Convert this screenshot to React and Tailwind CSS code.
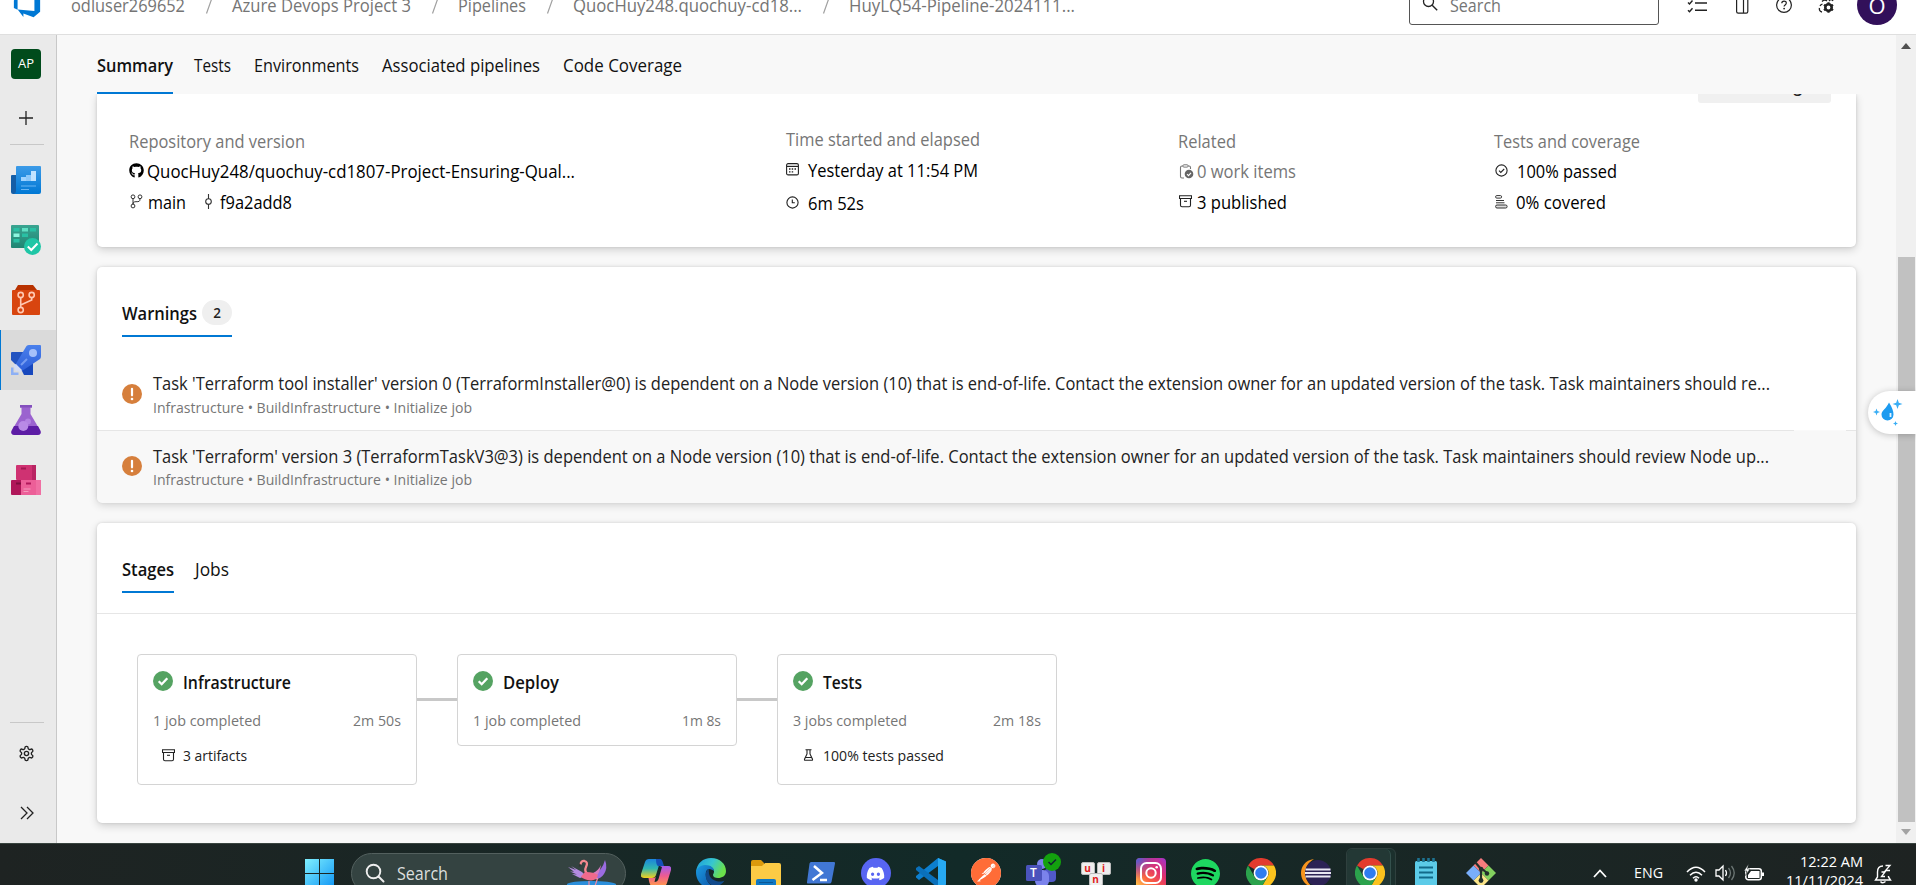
import React, { useLayoutEffect, useRef, useState } from "react";
import { FaGithub, FaDiscord } from "react-icons/fa";
import { SiPostman, SiSpotify } from "react-icons/si";

/* One line of text that always occupies exactly `w` pixels. */
function Fit({ w, className = "", children }) {
  const ref = useRef(null);
  const [scale, setScale] = useState(1);
  useLayoutEffect(() => {
    const natural = ref.current.getBoundingClientRect().width / scale;
    if (natural) setScale(w / natural);
  }, [w, children]);
  return (
    <span className={"inline-block shrink-0 whitespace-pre " + className} style={{ width: w }}>
      <span ref={ref} className="inline-block origin-left" style={{ transform: `translateY(-1px) scaleX(${scale})` }}>
        {children}
      </span>
    </span>
  );
}

function Svg({ w = 16, h = 16, box, className = "", children, ...rest }) {
  return (
    <svg width={w} height={h} viewBox={box || `0 0 ${w} ${h}`} fill="none" className={"block shrink-0 " + className} {...rest}>
      {children}
    </svg>
  );
}

/* ---------- header ---------- */
const crumbs = [
  ["odluser269652", 114, 21],
  ["Azure Devops Project 3", 179, 22],
  ["Pipelines", 68, 22],
  ["QuocHuy248.quochuy-cd18...", 229, 21],
  ["HuyLQ54-Pipeline-2024111...", 226, 0],
];

function Header() {
  return (
    <header className="h-[35px] shrink-0 overflow-hidden border-b border-[#dfdfdf] bg-white">
      <div className="-mt-[24px] flex h-[60px] items-center pl-[12px] text-[17.500px] text-[#757575]">
        <Svg w={30} h={30} box="0 0 16 16" className="-mt-[4px]">
          <path d="M15 3.622v8.512L11.500 15l-5.425-1.975v1.958L3.004 10.970l8.951.7V4.005L15 3.622zm-2.984.428L6.994 1v2.001L2.382 4.356 1 6.130v4.029l1.978.873V5.869l9.038-1.818z" fill="#0078d4" />
        </Svg>
        <div className="ml-[29px] flex items-center">
          {crumbs.map(([t, w], i) => (
            <React.Fragment key={t}>
              {i > 0 && (
                <span className="flex w-[47px] justify-center text-[#9a9a9a]">
                  <Svg w={8} h={20}><path d="M7 2 1.5 17.5" stroke="#a0a0a0" strokeWidth="1.2" /></Svg>
                </span>
              )}
              <Fit w={w} className="mt-px">{t}</Fit>
            </React.Fragment>
          ))}
        </div>
        <div className="-mt-[2px] ml-auto flex h-[40px] w-[250px] items-center rounded-[3px] border border-[#555] pl-[12px]">
          <Svg w={16} h={16} className="-mt-[4px]">
            <circle cx="6.5" cy="6.5" r="5" stroke="#222" strokeWidth="1.3" />
            <path d="m10.2 10.2 5 5" stroke="#222" strokeWidth="1.4" />
          </Svg>
          <Fit w={51} className="mt-[3px] ml-[12px]">Search</Fit>
        </div>
        <div className="flex items-center pl-[28px]">
          <Svg w={20} h={16} className="mt-[2px]">
            <path d="M1 3.5 2.5 5 5.5 1.5M1 11.2l1.5 1.5 3-3.5M8 4h12M8 11.3h12" stroke="#222" strokeWidth="1.4" />
          </Svg>
          <Svg w={14} h={18} className="ml-[28px]">
            <rect x="1.6" y="1.6" width="11.2" height="14.6" rx="1.6" stroke="#222" strokeWidth="1.2" />
            <path d="M8.500 2v14" stroke="#222" strokeWidth="1.2" />
          </Svg>
          <Svg w={18} h={18} className="-mt-[2px] ml-[26px]">
            <circle cx="9" cy="9" r="7.4" stroke="#222" strokeWidth="1.2" />
            <path d="M6.8 7.3c0-3 4.5-2.9 4.5-.2 0 1.8-2.2 1.8-2.2 3.4" stroke="#222" strokeWidth="1.2" />
            <circle cx="9.1" cy="12.6" r=".9" fill="#222" />
          </Svg>
          <Svg w={20} h={20} className="ml-[24px]">
            <path d="M5 16C3 15.500 2 14 2.500 12M3 10q.8-1.500 2.500-2M5 5.500C7 3.500 9 4 10 5M12 5c1.500-2 3-1.500 4 0" stroke="#222" strokeWidth="1.300" />
            <circle cx="11.500" cy="11.500" r="3.200" stroke="#222" strokeWidth="2.600" />
            <path d="M11.500 6.200v2M11.500 14.800v2M6.900 8.850l1.800 1M14.300 13.100l1.800 1M6.900 14.150l1.800-1M14.300 9.900l1.800-1" stroke="#222" strokeWidth="2.200" />
          </Svg>
          <div className="-mt-[2px] mr-[19px] ml-[20px] flex h-[40px] w-[40px] items-center justify-center rounded-full bg-[#32105a] text-[22px] text-white">
            O
          </div>
        </div>
      </div>
    </header>
  );
}

/* ---------- side rail ---------- */
function OverviewIcon() {
  return (
    <Svg w={30} h={30}>
      <defs><linearGradient id="ov" x2="0" y2="1"><stop stopColor="#3c9be8" /><stop offset="1" stopColor="#0078d4" /></linearGradient></defs>
      <path d="M0 11q0-1 1-1h6v19H2q-2 0-2-2z" fill="#155ea6" />
      <path d="M5 2q0-1 1-1h23q1 0 1 1v25q0 2-2 2H3q2-.5 2-3z" fill="url(#ov)" />
      <path d="M10 12h5v4h-5z" fill="#9fd3ff" /><path d="M15 10h5v6h-5z" fill="#8cc8fa" /><path d="M20 6h5v10h-5z" fill="#c0e3ff" />
      <path d="M10 21h15M10 24.500h8" stroke="#69b5f3" strokeWidth="1.200" />
    </Svg>
  );
}
function BoardsIcon() {
  return (
    <Svg w={30} h={30}>
      <defs><linearGradient id="bd" x2="0" y2="1"><stop stopColor="#3aa491" /><stop offset="1" stopColor="#1f8673" /></linearGradient></defs>
      <rect width="28" height="23" rx="1" fill="url(#bd)" />
      <path d="M2.500 3h6v3.500h-6zM19 3h6v3.500h-6zM11 8.500h6V12h-6zM2.500 14h6v3.500h-6z" fill="#29c0a4" />
      <path d="M11 3h6v3.500h-6z" fill="#5fe0c4" /><path d="M2.500 8.500h6V12h-6z" fill="#8cf5df" />
      <circle cx="21.500" cy="21.500" r="8.500" fill="#1fc6a6" />
      <path d="m16.800 21.500 3.500 3.500 6.200-6.500" stroke="#fff" strokeWidth="2" />
    </Svg>
  );
}
function ReposIcon() {
  return (
    <Svg w={30} h={30}>
      <path d="M7 0h15l2 2.500 2 2.500H4z" fill="#b83200" />
      <rect x="1" y="5" width="28" height="25" rx="1" fill="#d8450f" />
      <g stroke="#ffc9b3" strokeWidth="1.600"><circle cx="9.700" cy="10" r="2.600" /><circle cx="20.700" cy="10" r="2.600" /><circle cx="9.700" cy="25" r="2.600" /><path d="M9.700 12.600v9.800M20.700 12.600V15l-11 5" /></g>
    </Svg>
  );
}
function PipelinesIcon() {
  return (
    <Svg w={30} h={30}>
      <defs><linearGradient id="pl" x2="0" y2="1"><stop stopColor="#4a80ec" /><stop offset="1" stopColor="#2e5fd8" /></linearGradient></defs>
      <path d="M0 8q0-1 1-1h13L5 20 0 15z" fill="#2253c0" /><path d="M10 24l12-7v13h-9z" fill="#1747bd" />
      <path d="M15.500 1q1-1 2.500-1h11q1 0 1 1v10q0 2-1 3L11 26 4.500 19.500z" fill="url(#pl)" />
      <circle cx="22" cy="8" r="4" fill="#a6c1fa" />
      <path d="m16 14-6 6" stroke="#759bf0" strokeWidth="2" />
      <path d="M0 22.500h2.500v5H7.500V30H0z" fill="#8db0f5" /><path d="M2.500 20 5 19l6 6-1.500 2.500L7 25.500l-2 1z" fill="#d2dcf5" />
    </Svg>
  );
}
function TestIcon() {
  return (
    <Svg w={30} h={30}>
      <path d="M9 0h12v2.500h-1.500V9L29.500 26q.8 4-3 4h-23q-3.800 0-3-4L10.500 9V2.500H9z" fill="#9b63cf" />
      <path d="M3 21h24l2.500 5q.8 4-3 4h-23q-3.800 0-3-4z" fill="#5d1da5" />
      <path d="M9 0h12v2.500H9z" fill="#8450bd" />
      <circle cx="12.300" cy="21" r="5" fill="#b98ae6" /><circle cx="17" cy="16.500" r="3" fill="#b98ae6" opacity=".8" />
    </Svg>
  );
}
function ArtifactsIcon() {
  return (
    <Svg w={30} h={30}>
      <rect x="5" width="20" height="15" rx="1" fill="#cf3272" /><path d="M21 0h4v15h-4z" fill="#b92563" />
      <path d="M10 2.500h5v2h-5z" fill="#a31852" />
      <path d="M0 16q0-1 1-1h9v15H1q-1 0-1-1z" fill="#b0175a" /><path d="M10 15h19q1 0 1 1v13q0 1-1 1H10z" fill="#ec5f98" /><path d="M25 15h5v15h-5z" fill="#f06fa3" />
      <path d="M5 17.500h5v2H5z" fill="#7f0d3e" /><path d="M15 17.500h5v2h-5z" fill="#b0175a" /><path d="M12.500 24h7M12.500 26.500h5" stroke="#f59abd" />
    </Svg>
  );
}

const rail = [OverviewIcon, BoardsIcon, ReposIcon, PipelinesIcon, TestIcon, ArtifactsIcon];

function Rail() {
  return (
    <aside className="flex w-[57px] shrink-0 flex-col border-r border-[#c8c8c8] bg-[#eaeaea]">
      <div className="mt-[14px] ml-[11px] flex h-[30px] w-[30px] items-center justify-center rounded-[4px] bg-[#004b1c] text-white">
        <Fit w={16} className="mt-[2px] text-[13px]">AP</Fit>
      </div>
      <div className="flex h-[78px] w-[52px] items-center justify-center">
        <Svg w={14} h={14}><path d="M7 0v14M0 7h14" stroke="#222" strokeWidth="1.300" /></Svg>
      </div>
      <div className="-mt-[13px] ml-[10px] h-px w-[34px] bg-[#c8c8c8]" />
      <div className="mt-[5px] flex flex-col">
        {rail.map((Icon, i) => (
          <div key={i} className={"flex h-[60px] items-center border-l pl-[10px] " + (i === 3 ? "border-[#0078d4] bg-[#dadada]" : "border-transparent")}>
            <Icon />
          </div>
        ))}
      </div>
      <div className="mt-auto ml-[10px] h-px w-[34px] bg-[#c8c8c8]" />
      <div className="flex h-[60px] w-[53px] items-center justify-center">
        <Svg w={17} h={17} box="0 0 24 24" className="mt-px">
          <path d="M12.220 2h-.44a2 2 0 0 0-2 2v.18a2 2 0 0 1-1 1.730l-.43.25a2 2 0 0 1-2 0l-.15-.08a2 2 0 0 0-2.730.73l-.22.38a2 2 0 0 0 .73 2.730l.15.1a2 2 0 0 1 1 1.720v.51a2 2 0 0 1-1 1.740l-.15.09a2 2 0 0 0-.73 2.730l.22.38a2 2 0 0 0 2.730.73l.15-.08a2 2 0 0 1 2 0l.43.25a2 2 0 0 1 1 1.730V20a2 2 0 0 0 2 2h.44a2 2 0 0 0 2-2v-.18a2 2 0 0 1 1-1.730l.43-.25a2 2 0 0 1 2 0l.15.08a2 2 0 0 0 2.730-.73l.22-.39a2 2 0 0 0-.73-2.730l-.15-.08a2 2 0 0 1-1-1.740v-.5a2 2 0 0 1 1-1.740l.15-.09a2 2 0 0 0 .73-2.730l-.22-.38a2 2 0 0 0-2.730-.73l-.15.08a2 2 0 0 1-2 0l-.43-.25a2 2 0 0 1-1-1.730V4a2 2 0 0 0-2-2z" stroke="#222" strokeWidth="1.900" />
          <circle cx="12" cy="12" r="3" stroke="#222" strokeWidth="1.900" />
        </Svg>
      </div>
      <div className="flex h-[60px] w-[53px] items-center justify-center">
        <Svg w={14} h={14}><path d="m1 1 6 6-6 6M7 1l6 6-6 6" stroke="#222" strokeWidth="1.300" /></Svg>
      </div>
    </aside>
  );
}

/* ---------- small glyphs ---------- */
const Branch = () => (
  <Svg w={13} h={15}><g stroke="#333" strokeWidth="1"><circle cx="3" cy="2.800" r="1.900" /><circle cx="10" cy="2.800" r="1.900" /><circle cx="3" cy="12" r="1.900" /><path d="M3 4.700v5.400M10 4.700c0 3-1 3-4 3-2 0-3 .5-3 2.500" /></g></Svg>
);
const Commit = () => (
  <Svg w={9} h={15}><path d="M4.500 0v5M4.500 10v5" stroke="#333" strokeWidth="1.100" /><circle cx="4.500" cy="7.500" r="2.800" stroke="#333" strokeWidth="1.100" /></Svg>
);
const Calendar = () => (
  <Svg w={13} h={13}><rect x=".6" y=".6" width="11.800" height="11.300" rx="1.500" stroke="#222" strokeWidth="1.100" /><path d="M1 3.400h11" stroke="#222" strokeWidth="1.200" /><path d="M3 6h1.500M5.700 6h1.500M8.500 6H10M3 8.800h1.500M5.700 8.800h1.500" stroke="#222" strokeWidth="1.300" /></Svg>
);
const Clock = () => (
  <Svg w={13} h={13}><circle cx="6.500" cy="6.500" r="5.600" stroke="#222" strokeWidth="1.100" /><path d="M6.300 3.500v3.300h2.500" stroke="#222" strokeWidth="1.100" /></Svg>
);
const WorkItem = () => (
  <Svg w={15} h={15}><path d="M5 14H3q-1.500 0-1.500-1.500v-9Q1.500 2 3 2h7q1.500 0 1.500 1.500V5" stroke="#777" strokeWidth="1.100" /><rect x="4" y=".8" width="5" height="2.300" rx=".8" fill="#fff" stroke="#777" /><circle cx="10" cy="10" r="4.300" fill="#666" /><path d="m8 10.200 1.500 1.400L12 8.800" stroke="#fff" strokeWidth="1.100" /></Svg>
);
const Archive = () => (
  <Svg w={13} h={13}><path d="M.5.800h12v2.700H.5zM1.500 3.500h10v6.700q0 1.500-1.500 1.500H3q-1.500 0-1.500-1.500z" stroke="#222" strokeWidth="1.100" /><path d="M5 6.300h3" stroke="#222" strokeWidth="1.100" /></Svg>
);
const Passed = () => (
  <Svg w={13} h={13}><circle cx="6.500" cy="6.500" r="5.600" stroke="#222" strokeWidth="1.100" /><path d="m4 6.600 1.800 1.800L9.200 5" stroke="#222" strokeWidth="1.100" /></Svg>
);
const Covered = () => (
  <Svg w={13} h={14}><g stroke="#333" strokeWidth="1"><rect x=".6" y=".6" width="6" height="2.500" rx="1.200" /><path d="M1 5.500h8M1 7.800h8.500" /><rect x=".6" y="10" width="11.500" height="3" rx="1.400" fill="#ddd" /></g></Svg>
);
const Beaker = () => (
  <Svg w={11} h={12}><path d="M2.500.8h6M4 1v4L1.500 10.300q-.3 1 .8 1h6.400q1.100 0 .8-1L7 5V1M2.800 8.500h5.400" stroke="#222" strokeWidth="1.100" /></Svg>
);
const Success = () => (
  <Svg w={20} h={20}><circle cx="10" cy="10" r="10" fill="#55a362" /><path d="m5.700 10.200 3 3 5.600-6" stroke="#fff" strokeWidth="2.300" /></Svg>
);
const Warn = () => (
  <Svg w={20} h={20}><circle cx="10" cy="10" r="10" fill="#d67f3c" /><path d="M10 4.800v6.500" stroke="#fff" strokeWidth="2.200" strokeLinecap="round" /><circle cx="10" cy="15" r="1.300" fill="#fff" /></Svg>
);

/* ---------- main content ---------- */
const tabs = [["Summary", 76], ["Tests", 37], ["Environments", 105], ["Associated pipelines", 158], ["Code Coverage", 119]];
const card = "rounded-[5px] bg-white shadow-[0_3px_8px_rgba(0,0,0,0.16),0_0_3px_rgba(0,0,0,0.12)]";

function Tabs() {
  return (
    <nav className="flex h-[59px] shrink-0 pl-[40px] text-[17.500px] text-[#111]">
      {tabs.map(([t, w], i) => (
        <div key={t} className={"flex h-full items-center border-b-2 " + (i === 0 ? "mr-[21px] border-[#0078d4] font-semibold" : "mr-[23px] border-transparent")}>
          <Fit w={w} className="mt-[5px]">{t}</Fit>
        </div>
      ))}
    </nav>
  );
}

function Summary() {
  const row = "flex h-[30px] items-center ";
  const head = row + "text-[#767676]";
  return (
    <section className="h-[173px] shrink-0 overflow-hidden px-[40px]">
      <div className={"flex h-[153px] flex-col rounded-t-none pl-[33px] " + card}>
        <div className="mr-[25px] h-[9px] self-end overflow-hidden">
          <div className="-mt-[31px] flex h-[40px] w-[133px] items-center justify-center rounded-[3px] bg-[#f0f0f0] text-[17.500px] font-semibold text-[#222]">
            <Fit w={93} className="mt-[6px]">View change</Fit>
          </div>
        </div>
        <div className="flex pt-[24px] text-[17.500px] text-black">
          <div className="-ml-px w-[657px]">
            <div className={head}><Fit w={176}>Repository and version</Fit></div>
            <div className={row}><FaGithub className="mr-[3px] -mt-[3px] h-[15px] w-[15px]" /><Fit w={428}>QuocHuy248/quochuy-cd1807-Project-Ensuring-Qual...</Fit></div>
            <div className={row + "mt-px"}>
              <span className="-mt-[3px] mr-[5px] ml-px"><Branch /></span><Fit w={38}>main</Fit>
              <span className="mr-[7px] ml-[18px] -mt-[4px]"><Commit /></span><Fit w={72}>f9a2add8</Fit>
            </div>
          </div>
          <div className="-mt-[2px] w-[393px]">
            <div className={head}><Fit w={194}>Time started and elapsed</Fit></div>
            <div className={row + "mt-px"}><span className="-mt-[3px] mr-[9px]"><Calendar /></span><Fit w={170}>Yesterday at 11:54 PM</Fit></div>
            <div className={row + "mt-[3px]"}><span className="-mt-[3px] mr-[9px]"><Clock /></span><Fit w={56}>6m 52s</Fit></div>
          </div>
          <div className="-ml-px w-[316px]">
            <div className={head}><Fit w={58}>Related</Fit></div>
            <div className={head}><span className="-mt-[2px] mr-[3px] ml-px"><WorkItem /></span><Fit w={99}>0 work items</Fit></div>
            <div className={row + "mt-px"}><span className="-mt-[3px] mr-[5px] ml-px"><Archive /></span><Fit w={90}>3 published</Fit></div>
          </div>
          <div>
            <div className={head}><Fit w={146}>Tests and coverage</Fit></div>
            <div className={row}><span className="-mt-[4px] mr-[9px] ml-px"><Passed /></span><Fit w={100}>100% passed</Fit></div>
            <div className={row + "mt-px"}><span className="-mt-[3px] mr-[8px] ml-px"><Covered /></span><Fit w={90}>0% covered</Fit></div>
          </div>
        </div>
      </div>
    </section>
  );
}

function Warning({ text, w, shaded }) {
  return (
    <div className={"flex h-[72px] items-center pl-[25px] " + (shaded ? "rounded-b-[5px] bg-[#f8f8f8]" : "bg-white")}>
      <span className={shaded ? "-mt-[2px]" : "-mt-px"}><Warn /></span>
      <div className={"ml-[11px] flex flex-col " + (shaded ? "pt-[3px]" : "pt-[4px]")}>
        <div className="flex h-[24px] items-center text-[17.500px] text-[#222]"><Fit w={w}>{text}</Fit></div>
        <div className="flex h-[23px] items-center text-[15px] text-[#767676]"><Fit w={319}>Infrastructure • BuildInfrastructure • Initialize job</Fit></div>
      </div>
    </div>
  );
}

function Warnings() {
  return (
    <section className={"mx-[40px] h-[235px] shrink-0 " + card}>
      <div className="ml-[25px] flex h-[70px] w-[110px] items-end border-b-2 border-[#0078d4]">
        <div className="flex h-[44px] w-full items-center justify-between">
          <Fit w={75} className="mt-[3px] text-[17.500px] font-semibold text-[#111]">Warnings</Fit>
          <span className="-mt-[2px] flex h-[25px] w-[30px] items-center justify-center rounded-full bg-[#efefef] pt-[3px] text-[13.500px] font-semibold text-[#222]">2</span>
        </div>
      </div>
      <div className="h-[21px]" />
      <Warning w={1617} text="Task 'Terraform tool installer' version 0 (TerraformInstaller@0) is dependent on a Node version (10) that is end-of-life. Contact the extension owner for an updated version of the task. Task maintainers should re..." />
      <div className="flex h-px bg-[#e6e6e6] pr-[10px]"><div className="ml-auto h-px w-[52px] bg-[#fafafa]" /></div>
      <Warning shaded w={1616} text="Task 'Terraform' version 3 (TerraformTaskV3@3) is dependent on a Node version (10) that is end-of-life. Contact the extension owner for an updated version of the task. Task maintainers should review Node up..." />
    </section>
  );
}

function Stage({ name, nw, jobs, jw, time, tw, extra, ew, icon }) {
  return (
    <div className={"flex w-[280px] flex-col rounded-[4px] border border-[#d4d4d4] bg-white px-[15px] " + (extra ? "h-[131px]" : "h-[92px]")}>
      <div className="mt-[16px] flex h-[24px] items-center text-[17.500px] font-semibold text-[#111]">
        <span className="-mt-[4px] mr-[10px]"><Success /></span><Fit w={nw}>{name}</Fit>
      </div>
      <div className="mt-[14px] flex h-[24px] items-center justify-between text-[15px] text-[#767676]">
        <Fit w={jw}>{jobs}</Fit><Fit w={tw}>{time}</Fit>
      </div>
      {extra && (
        <div className="mt-[11px] flex h-[24px] items-center text-[15px] text-[#222]">
          <span className="-mt-[2px] flex w-[30px] pl-[9px]">{icon}</span><Fit w={ew}>{extra}</Fit>
        </div>
      )}
    </div>
  );
}

function Stages() {
  const line = <div className="mt-[44px] h-[3px] w-[40px] bg-[#c8c8c8]" />;
  return (
    <section className={"mx-[40px] mt-[21px] h-[300px] shrink-0 " + card}>
      <div className="flex h-[91px] border-b border-[#e6e6e6] pl-[25px] text-[17.500px] text-[#111]">
        <div className="flex h-[70px] items-center border-b-2 border-[#0078d4] pt-[27px] font-semibold"><Fit w={52}>Stages</Fit></div>
        <div className="ml-[21px] flex h-[70px] items-center pt-[25px]"><Fit w={34}>Jobs</Fit></div>
      </div>
      <div className="flex items-start pt-[40px] pl-[40px]">
        <Stage name="Infrastructure" nw={108} jobs="1 job completed" jw={108} time="2m 50s" tw={48} extra="3 artifacts" ew={64} icon={<Archive />} />
        {line}
        <Stage name="Deploy" nw={56} jobs="1 job completed" jw={108} time="1m 8s" tw={39} />
        {line}
        <Stage name="Tests" nw={39} jobs="3 jobs completed" jw={114} time="2m 18s" tw={48} extra="100% tests passed" ew={121} icon={<span className="pl-px"><Beaker /></span>} />
      </div>
    </section>
  );
}

function Scrollbar() {
  return (
    <div className="flex w-[20px] shrink-0 flex-col items-center bg-[#f0f0f0]">
      <Svg w={10} h={6} className="mt-[8px]"><path d="M0 6 5 0l5 6z" fill="#505050" /></Svg>
      <div className="mt-[208px] h-[565px] w-[17px] bg-[#c1c1c1]" />
      <Svg w={10} h={6} className="mt-[7px]"><path d="M0 0h10L5 6z" fill="#a3a3a3" /></Svg>
    </div>
  );
}

/* ---------- task bar ---------- */
const Copilot = () => (
  <Svg w={30} h={30}>
    <defs>
      <linearGradient id="c1" x2="0" y2="1"><stop stopColor="#1b84dd" /><stop offset=".5" stopColor="#30b7b0" /><stop offset="1" stopColor="#f4d11c" /></linearGradient>
      <linearGradient id="c2" x2="0" y2="1"><stop stopColor="#a05cf0" /><stop offset=".5" stopColor="#ee5b90" /><stop offset="1" stopColor="#ff9a4a" /></linearGradient>
    </defs>
    <path d="M21 8h6q4 0 3 4l-4 13q-1 3-4 3H11q-2 0-3-5l-.5-3H12q3 0 4-3l2-6q1-3 3-3z" fill="url(#c2)" />
    <path d="M14.500 20 18 9h3l-3.500 12q-1 3-4 3z" fill="#122a28" />
    <path d="M8 1h10q2 0 1 3l-4 13q-1 3-4 3H3q-4 0-3-4L4 4q1-3 4-3z" fill="url(#c1)" />
    <path d="M15 1h4q2 0 3 4l1 3h-6q-2-1-2-7z" fill="#1450b8" />
  </Svg>
);
const Edge = () => (
  <Svg w={30} h={30}>
    <defs>
      <linearGradient id="e1" x2="1" y2=".4"><stop stopColor="#1a9bdc" /><stop offset=".55" stopColor="#37c6d0" /><stop offset="1" stopColor="#6be04a" /></linearGradient>
      <linearGradient id="e2" x2="1" y2="1"><stop stopColor="#1b9be2" /><stop offset="1" stopColor="#0d55a8" /></linearGradient>
    </defs>
    <path d="M0 14C1 5 7 0 15 0c9 0 15 6 15 13 0 5-4 7-8 7-3 0-5-1-5-3 0-1 1-1 1-4 0-2-3-5-7-5-6 0-10 4-11 6z" fill="url(#e1)" />
    <path d="M0 14c0-3 4-7 9-7 6 0 9 3 9 6-1-1-3-2-5-2-5 0-5 14 5 18-10 3-18-5-18-15z" fill="url(#e2)" />
    <path d="M13 11c-6 2-4 17 7 17 4 0 7-3 8.500-5.500C24 25 11 23 13 11z" fill="#114a8b" />
  </Svg>
);
const Folder = () => (
  <Svg w={30} h={30}><path d="M0 4q0-2 2-2h8l3 3v4H0z" fill="#dc9a0c" /><path d="M0 8h11l3-3h14q2 0 2 2v21H0z" fill="#fccb45" /><path d="M5 23q0-2 2-2h16q2 0 2 2v7H5z" fill="#0f78c4" /><path d="M8 24.500h14" stroke="#0b5796" /></Svg>
);
const PowerShell = () => (
  <Svg w={30} h={30}><path d="M5 4h23q1.500 0 1 1.500L25.500 24q-.5 1.500-2 1.500H2q-1.500 0-1-1.500L3.500 5.500Q4 4 5 4z" fill="#4177d4" /><path d="m8 8 8 7L6.500 22M14 22h7" stroke="#fff" strokeWidth="2.500" /></Svg>
);
const Discord = () => (
  <span className="flex h-[30px] w-[30px] items-center justify-center rounded-full bg-[#5865f2]"><FaDiscord className="h-[19px] w-[19px] text-white" /></span>
);
const VsCode = () => (
  <Svg w={30} h={30}><path d="m22 0 8 3.500v23L22 30V8L3 22l-3-2.500V18z" fill="#0c7fcf" /><path d="m3 8 19 14v8L0 12v-2z" fill="#0a70bb" /><path d="m22 0 8 3.500v23L22 30z" fill="#27a9f2" /></Svg>
);
const Postman = () => (
  <span className="flex h-[30px] w-[30px] rounded-full bg-white"><SiPostman className="h-[30px] w-[30px] text-[#ff6c37]" /></span>
);
const Teams = () => (
  <span className="relative block h-[30px] w-[30px]">
    <Svg w={30} h={30}><circle cx="16" cy="6" r="5" fill="#7b83eb" /><circle cx="25" cy="8" r="3" fill="#5059c9" /><rect x="18" y="11" width="12" height="13" rx="4" fill="#5059c9" /><rect x="9" y="12" width="14" height="17" rx="6" fill="#7b83eb" /><rect y="7" width="16" height="16" rx="1.500" fill="#4b53bc" /></Svg>
    <span className="absolute top-[7px] left-0 flex h-[16px] w-[16px] items-center justify-center text-[12px] font-semibold text-white">T</span>
    <Svg w={18} h={18} className="absolute -top-[5px] left-[17px]"><circle cx="9" cy="9" r="9" fill="#13a10e" /><path d="m5.500 9 2.500 2.500 5-5" stroke="#123" strokeWidth="1.500" /></Svg>
  </span>
);
const Key = ({ c }) => (
  <span className="flex h-[13px] w-[14px] items-center justify-center rounded-[2px] border border-[#bbb] bg-[#eee] pb-[2px] text-[10px] leading-none font-bold text-[#e02020]">{c}</span>
);
const UniKey = () => (
  <span className="flex h-[30px] w-[30px] flex-col items-center pt-[4px]"><span className="flex w-full justify-between"><Key c="u" /><Key c="i" /></span><span className="-mt-[2px]"><Key c="n" /></span></span>
);
const Instagram = () => (
  <Svg w={30} h={30}>
    <defs>
      <linearGradient id="ig" x1="0" y1="1" x2="1" y2="0"><stop stopColor="#ffd34d" /><stop offset=".35" stopColor="#fb6040" /><stop offset=".65" stopColor="#e1306c" /><stop offset="1" stopColor="#a033d0" /></linearGradient>
      <radialGradient id="ig2" cx="0" cy="0" r=".7"><stop stopColor="#3f61e0" /><stop offset="1" stopColor="#7a3ad0" stopOpacity="0" /></radialGradient>
    </defs>
    <rect width="30" height="30" rx="4" fill="url(#ig)" /><rect width="30" height="30" rx="4" fill="url(#ig2)" />
    <rect x="5" y="5" width="20" height="20" rx="5.500" stroke="#fff" strokeWidth="2" /><circle cx="15" cy="15" r="4.700" stroke="#fff" strokeWidth="2" /><circle cx="20.700" cy="9.300" r="1.300" fill="#fff" />
  </Svg>
);
const Spotify = () => (
  <span className="flex h-[30px] w-[30px] items-center justify-center"><span className="rounded-full bg-black"><SiSpotify className="h-[29px] w-[29px] text-[#1ed760]" /></span></span>
);
const Chrome = () => (
  <Svg w={30} h={30}>
    <path d="M2 7.500A15 15 0 0 1 28 7.500H15a7.500 7.500 0 0 0-6.500 3.800z" fill="#e33b2e" />
    <path d="M28 7.500A15 15 0 0 1 15 30l6.500-11.200A7.500 7.500 0 0 0 15 7.500z" fill="#fcc31e" />
    <path d="M2 7.500A15 15 0 0 0 15 30l6.500-11.300a7.500 7.500 0 0 1-13 0z" fill="#2ba24c" />
    <circle cx="15" cy="15" r="7.400" fill="#fff" /><circle cx="15" cy="15" r="5.800" fill="#2f7cf0" />
  </Svg>
);
const Eclipse = () => (
  <Svg w={30} h={30}><path d="M13 1C4 2 0 9 0 15s4 13 12 14.500C2 22 1 8 13 1z" fill="#f7941e" /><circle cx="17" cy="15" r="13" fill="#2c2255" /><path d="M4.500 11.500h25M4 15h26M4.500 18.500h25" stroke="#e8e6f2" strokeWidth="1.900" /></Svg>
);
const Notepad = () => (
  <Svg w={30} h={30}><rect x="4" y="3" width="22" height="27" rx="1.500" fill="#5ccbe8" /><path d="M4 27.500h22V30H4z" fill="#e8eef0" /><path d="M7.500 0v4M12.500 0v4M17.500 0v4M22.500 0v4" stroke="#1d7392" strokeWidth="2.600" /><path d="M8 9.500h14M8 14.500h14M8 19.500h14" stroke="#126a8a" strokeWidth="1.800" /></Svg>
);
const Git = () => (
  <Svg w={30} h={30}>
    <path d="m15 0 7.500 7.500L15 15 7.500 7.500z" fill="#f77d7d" /><path d="M22.500 7.500 30 15l-7.500 7.500L15 15z" fill="#83d05f" /><path d="m15 15 7.500 7.500L15 30l-7.500-7.500z" fill="#fbe58a" /><path d="M7.500 7.500 15 15l-7.500 7.500L0 15z" fill="#79aefa" />
    <path d="m9 4 6 7v12M15 10l6 5" stroke="#22302c" strokeWidth="2.200" /><circle cx="15" cy="11" r="2.200" fill="#22302c" /><circle cx="21" cy="15.500" r="2.200" fill="#22302c" /><circle cx="15" cy="22.500" r="2.400" fill="#22302c" />
  </Svg>
);
const Flamingo = () => (
  <Svg w={50} h={28}>
    <path d="M0 25q4-3 24-3t25 3v3H0z" fill="#2b8fdb" />
    <path d="m1 8 8 3-5-4 11 6 4 4-6 2-8-4 5 .5-7-3 4 .2z" fill="#b48be0" />
    <path d="M27 15q8-3 11-14 3 8-1 14-4 6-10 5z" fill="#9a6be0" />
    <path d="M26 14q5-2 8-8-1 8-7 14z" fill="#d67ac0" />
    <path d="M22 22v6M27 18l3.500 1.500L28 27" stroke="#f58aa0" strokeWidth="1.200" />
    <path d="M13.500 5.500q.5-4 4-3.500 4 1 1.500 6-2 4 1.500 7" stroke="#f58a8f" strokeWidth="2.300" />
    <path d="M18 13q5 0 9 1l4 2q-1 5-7 5.500-8-1-10-4z" fill="#ef6a8c" />
    <path d="m12.500 4-.8 4 2.200-1.500z" fill="#333" />
  </Svg>
);

const apps = [Copilot, Edge, Folder, PowerShell, Discord, VsCode, Postman, Teams, UniKey, Instagram, Spotify, Chrome, Eclipse, Chrome, Notepad, Git];

function Taskbar() {
  return (
    <footer className="flex h-[42px] shrink-0 overflow-hidden border-t border-[#39443f] bg-linear-to-r from-[#1e2322] via-[#122a28] to-[#1e2322] text-white">
      <Svg w={30} h={30} className="mt-[15px] ml-[305px]">
        <defs><linearGradient id="wn" x2="1" y2="1" gradientUnits="objectBoundingBox"><stop stopColor="#7ff0ff" /><stop offset="1" stopColor="#1095f5" /></linearGradient></defs>
        <path d="M0 0h14v14H0zM15 0h14v14H15zM0 15h14v14H0zM15 15h14v14H15z" fill="url(#wn)" />
      </Svg>
      <div className="mt-[9px] ml-[16px] flex h-[41px] w-[275px] shrink-0 items-center rounded-full border border-[#53605e] bg-[#344341] pl-[13px]">
        <Svg w={20} h={20} className="-mt-[2px]"><circle cx="8.500" cy="8.500" r="6.800" stroke="#eee" strokeWidth="1.900" /><path d="m13.500 13.500 5 5" stroke="#eee" strokeWidth="2" strokeLinecap="round" /></Svg>
        <Fit w={51} className="mt-[2px] ml-[12px] text-[17.500px] text-[#dcdfde]">Search</Fit>
        <span className="mt-[1px] mr-[8px] ml-auto self-start pt-[4px]"><Flamingo /></span>
      </div>
      <div className="ml-[2px] flex">
        {apps.map((Icon, i) => (
          <div key={i} className="flex w-[55px] justify-center pt-[4px]">
            {i === 13 ? (
              <div className="flex h-[46px] w-[50px] rounded-[6px] border border-[#2f403e] bg-[#1b302d]">
                <div className="flex h-full w-[44px] justify-center rounded-[6px] border-r border-[#34514d] bg-[#233835] pt-[9px] pl-[4px]"><Icon /></div>
              </div>
            ) : (
              <div className="pt-[10px]"><Icon /></div>
            )}
          </div>
        ))}
      </div>
      <div className="ml-auto flex">
        <Svg w={14} h={9} className="mt-[25px]"><path d="m1 8 6-6.500L13 8" stroke="#fff" strokeWidth="1.800" /></Svg>
        <Fit w={29} className="mt-[19px] ml-[27px] text-[14.600px]">ENG</Fit>
        <Svg w={20} h={17} className="mt-[21px] ml-[23px]"><path d="M1 7Q10-2.500 19 7M4 10.200q6-6 12 0M7 13.200q3-3 6 0" stroke="#fff" strokeWidth="1.500" /><circle cx="10" cy="15" r="1.700" fill="#fff" /></Svg>
        <Svg w={21} h={18} className="mt-[20px] ml-[9px]"><path d="M1 6h3l4-4v14l-4-4H1z" stroke="#fff" strokeWidth="1.300" /><path d="M10.500 6q2 3 0 6" stroke="#fff" strokeWidth="1.300" /><path d="M13.500 4q4 5 0 10M16.500 2q5.500 7 0 14" stroke="#6c7674" strokeWidth="1.300" /></Svg>
        <Svg w={21} h={18} className="mt-[20px] ml-[8px]"><rect x="1.800" y="4.800" width="15.500" height="11" rx="2.500" stroke="#fff" strokeWidth="1.500" /><path d="M7 7h8.500v7H4v-3z" fill="#fff" /><path d="M18 8.500h2v3.500h-2z" fill="#fff" /><path d="M4.500 0 0 7h3L1.500 11.500 6 5H3.500z" fill="#fff" stroke="#1b2523" strokeWidth=".5" /></Svg>
        <div className="ml-[21px] flex w-[77px] flex-col items-end pt-[9px] text-[14.600px] leading-[19px]">
          <Fit w={63}>12:22 AM</Fit>
          <Fit w={77}>11/11/2024</Fit>
        </div>
        <Svg w={18} h={20} className="mt-[20px] mr-[24px] ml-[11px]">
          <path d="M9 2Q3.500 2 3.500 8v5L1.500 16h15l-2-3v-1M6.500 17.500q2 2.500 5 0" stroke="#fff" strokeWidth="1.400" />
          <path d="M11.500 1.500h4.500l-4.500 5H16M7.500 8h3.500l-3.500 4.500H11" stroke="#fff" strokeWidth="1.300" />
        </Svg>
      </div>
    </footer>
  );
}

function Assistant() {
  return (
    <div className="absolute top-[391px] right-0 flex h-[43px] w-[48px] items-center rounded-l-full bg-white pl-[5px] shadow-[0_1px_7px_rgba(0,0,0,0.22)]">
      <Svg w={30} h={28}>
        <path d="M16.500 5q4.500 7 4.500 12a6 6 0 0 1-12 0c0-4 5-6 7.500-12z" fill="#1c9bf0" transform="translate(-.5 -1.500)" />
        <path d="M17.500 14v4" stroke="#e0f3ff" strokeWidth="1.800" />
        <path d="m24.500 0 1.300 3.700 3.700 1.300-3.700 1.300-1.300 3.700-1.300-3.700L19.500 5l3.700-1.300zM3.500 9.500l.9 2.600 2.600.9-2.600.9-.9 2.600-.9-2.600L0 13l2.600-.9zM22.500 22l.7 1.800 1.800.7-1.800.7-.7 1.800-.7-1.800-1.800-.7 1.800-.7z" fill="#3aaef5" />
      </Svg>
    </div>
  );
}

export default function App() {
  return (
    <div className="relative flex h-[885px] w-[1916px] flex-col overflow-hidden bg-[#f8f8f8] font-['Open_Sans','Noto_Sans',sans-serif]">
      <Header />
      <div className="flex h-[808px] shrink-0">
        <Rail />
        <main className="flex min-w-0 flex-1 flex-col overflow-hidden bg-[#f8f8f8]">
          <Tabs />
          <Summary />
          <Warnings />
          <Stages />
        </main>
        <Scrollbar />
      </div>
      <Taskbar />
      <Assistant />
    </div>
  );
}
